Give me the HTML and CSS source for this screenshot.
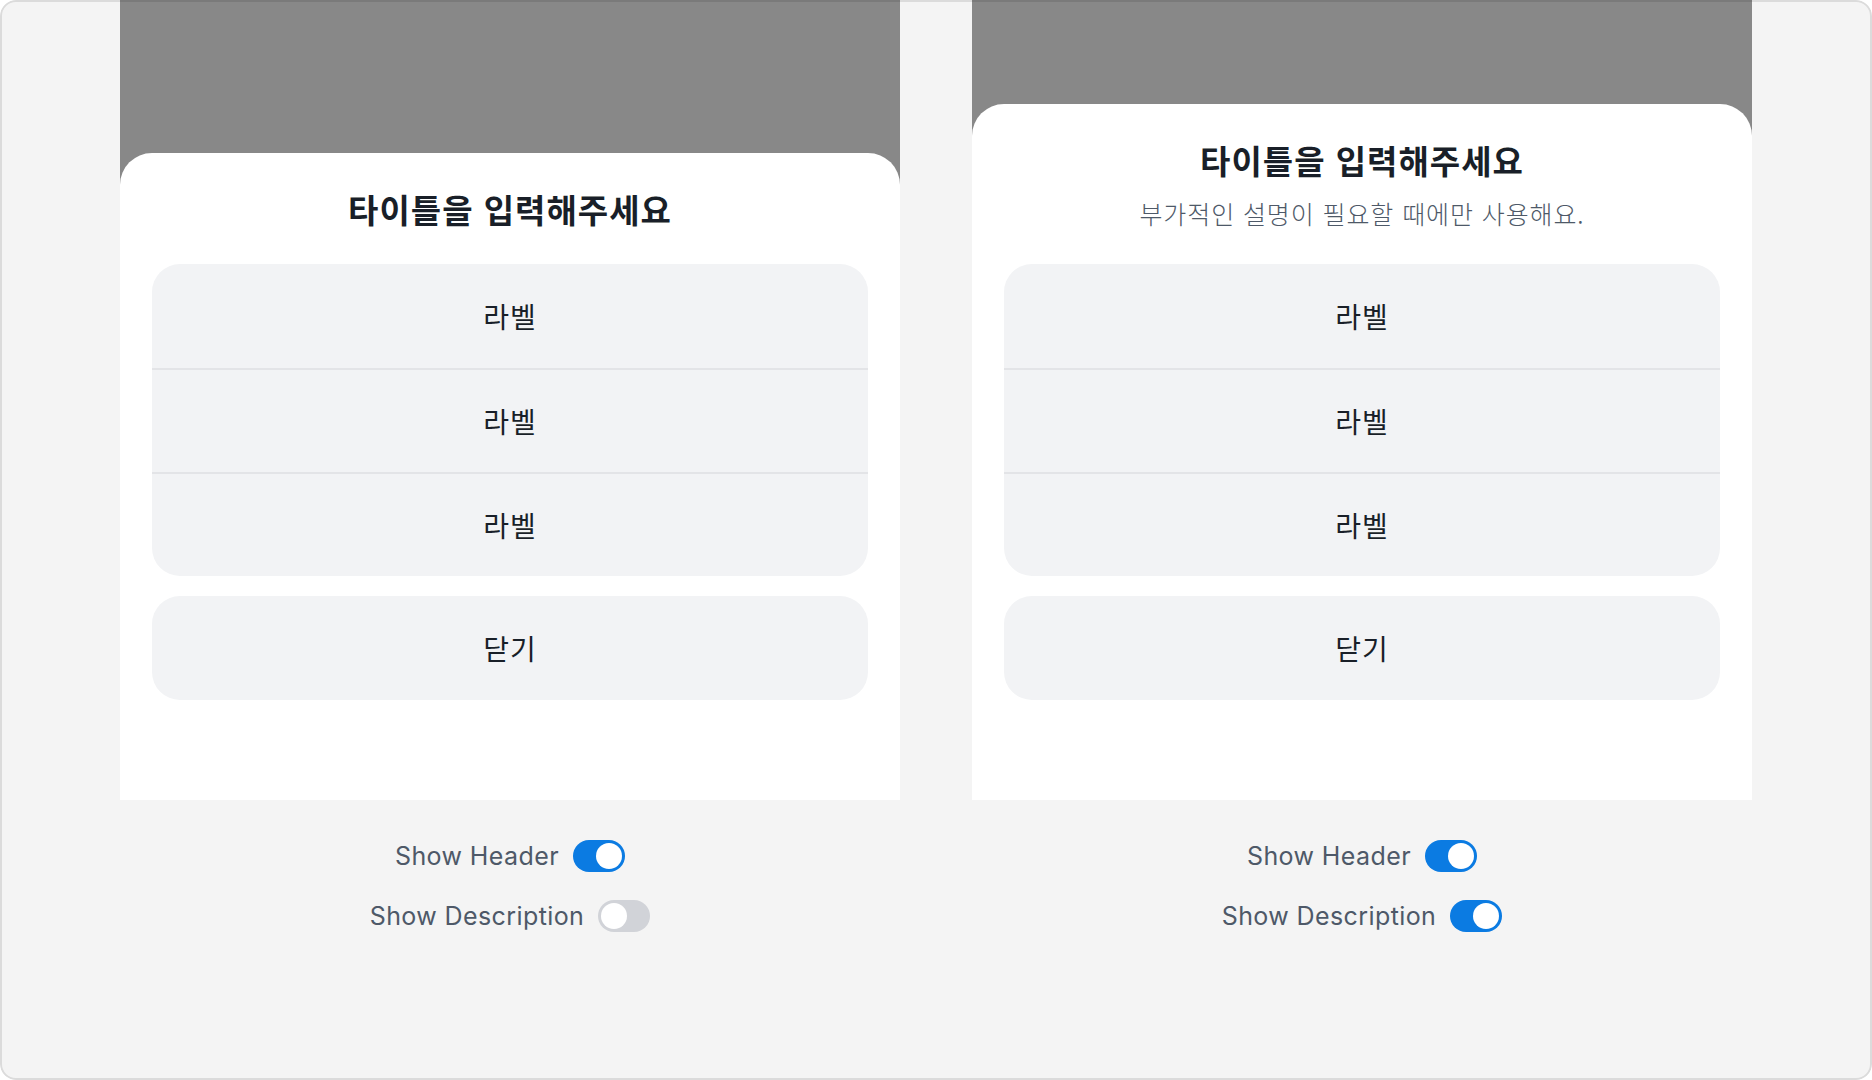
FILE: index.html
```html
<!DOCTYPE html>
<html lang="ko">
  <head>
    <meta charset="UTF-8" />
    <meta name="viewport" content="width=device-width, initial-scale=1.0" />
    <title>Bottom Sheet</title>
    <link rel="stylesheet" href="styles.css">
  </head>

  <body>
    <div class="frame">
      <section class="demo">
        <div class="screen">
          <div class="sheet">
            <div class="sheet-header">
              <h2 class="sheet-title">타이틀을 입력해주세요</h2>
            </div>
            <ul class="option-list">
              <li class="option">라벨</li>
              <li class="option">라벨</li>
              <li class="option">라벨</li>
            </ul>
            <button class="close-button">닫기</button>
          </div>
        </div>
        <div class="controls">
          <div class="control">
            <span>Show Header</span>
            <span class="switch on"></span>
          </div>
          <div class="control">
            <span>Show Description</span>
            <span class="switch"></span>
          </div>
        </div>
      </section>

      <section class="demo">
        <div class="screen">
          <div class="sheet">
            <div class="sheet-header">
              <h2 class="sheet-title">타이틀을 입력해주세요</h2>
              <p class="sheet-desc">부가적인 설명이 필요할 때에만 사용해요.</p>
            </div>
            <ul class="option-list">
              <li class="option">라벨</li>
              <li class="option">라벨</li>
              <li class="option">라벨</li>
            </ul>
            <button class="close-button">닫기</button>
          </div>
        </div>
        <div class="controls">
          <div class="control">
            <span>Show Header</span>
            <span class="switch on"></span>
          </div>
          <div class="control">
            <span>Show Description</span>
            <span class="switch on"></span>
          </div>
        </div>
      </section>
    </div>
  </body>
</html>
```

FILE: styles.css
```css
body {
  margin: 0;
  background-color: #fff;
  font-family: "Noto Sans CJK KR", "Noto Sans", sans-serif;
}

.frame {
  position: relative;
  width: 1872px;
  height: 1080px;
  display: flex;
  justify-content: center;
  gap: 72px;
  background-color: #f4f4f4;
  border-radius: 16px;
  overflow: hidden;
}

.frame::after {
  content: "";
  position: absolute;
  inset: 0;
  border: 2px solid rgba(0, 0, 0, 0.1);
  border-radius: 16px;
  pointer-events: none;
}

.demo {
  width: 780px;
}

.screen {
  height: 800px;
  background-color: #888;
  display: flex;
  flex-direction: column;
  justify-content: flex-end;
}

.sheet {
  background-color: #fff;
  border-radius: 32px 32px 0 0;
  padding: 36px 32px 100px;
}

.sheet-header {
  text-align: center;
  margin-bottom: 35px;
}

.sheet-title {
  margin: 0;
  font-size: 33px;
  line-height: 40px;
  font-weight: 700;
  color: #191f28;
  letter-spacing: 1px;
}

.sheet-desc {
  margin: 17px 0 0;
  font-size: 25px;
  line-height: 32px;
  font-weight: 300;
  color: #4e5968;
  letter-spacing: 0.9px;
}

.option-list {
  list-style: none;
  margin: 0;
  padding: 0;
  background-color: #f2f3f5;
  border-radius: 28px;
  overflow: hidden;
}

.option {
  height: 104px;
  box-sizing: border-box;
  display: flex;
  align-items: center;
  justify-content: center;
  font-size: 28px;
  letter-spacing: 1px;
  color: #191f28;
}

.option + .option {
  border-top: 2px solid #e3e4e7;
}

.close-button {
  display: block;
  width: 100%;
  height: 104px;
  margin-top: 20px;
  border: none;
  border-radius: 28px;
  background-color: #f2f3f5;
  font-family: inherit;
  font-size: 28px;
  letter-spacing: 1px;
  color: #191f28;
  cursor: pointer;
}

.controls {
  padding-top: 40px;
  display: flex;
  flex-direction: column;
  align-items: center;
  gap: 28px;
}

.control {
  display: flex;
  align-items: center;
  gap: 14px;
  font-family: Inter, "Noto Sans", sans-serif;
  font-size: 25px;
  letter-spacing: 0.4px;
  color: #4e5968;
}

.switch {
  position: relative;
  width: 52px;
  height: 32px;
  border-radius: 16px;
  background-color: #d1d3d8;
}

.switch::after {
  content: "";
  position: absolute;
  top: 3px;
  left: 3px;
  width: 26px;
  height: 26px;
  border-radius: 50%;
  background-color: #fff;
}

.switch.on {
  background-color: #0b7be2;
}

.switch.on::after {
  left: 23px;
}
```
